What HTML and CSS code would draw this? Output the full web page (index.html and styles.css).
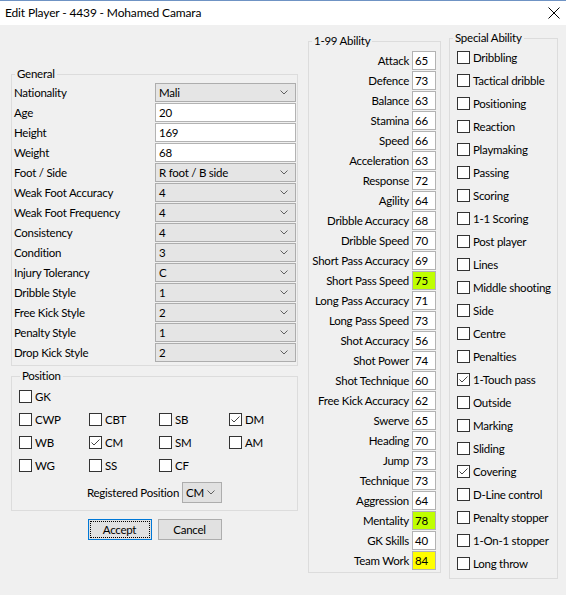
FILE: index.html
```html
<!DOCTYPE html>
<html>
<head>
<meta charset="utf-8">
<link rel="stylesheet" href="styles.css">
</head>
<body>
<div class="window">
  <div class="titlebar">
    <span class="title">Edit Player - 4439 - Mohamed Camara</span>
    <svg class="close" width="12" height="12" viewBox="0 0 12 12"><path d="M0.5 0.5 L11.5 11.5 M11.5 0.5 L0.5 11.5" stroke="#000" stroke-width="1" fill="none"/></svg>
  </div>
  <div class="content">
    <div class="left">
      <fieldset class="group general">
        <legend>General</legend>
        <div class="form-grid">
          <span class="lbl">Nationality</span><div class="combo"><span>Mali</span><svg class="chev" width="8" height="5" viewBox="0 0 8 5"><path d="M0.5 0.5 L4 4 L7.5 0.5" stroke="#606060" fill="none"/></svg></div>
          <span class="lbl">Age</span><div class="textbox">20</div>
          <span class="lbl">Height</span><div class="textbox">169</div>
          <span class="lbl">Weight</span><div class="textbox">68</div>
          <span class="lbl">Foot / Side</span><div class="combo"><span>R foot / B side</span><svg class="chev" width="8" height="5" viewBox="0 0 8 5"><path d="M0.5 0.5 L4 4 L7.5 0.5" stroke="#606060" fill="none"/></svg></div>
          <span class="lbl">Weak Foot Accuracy</span><div class="combo"><span>4</span><svg class="chev" width="8" height="5" viewBox="0 0 8 5"><path d="M0.5 0.5 L4 4 L7.5 0.5" stroke="#606060" fill="none"/></svg></div>
          <span class="lbl">Weak Foot Frequency</span><div class="combo"><span>4</span><svg class="chev" width="8" height="5" viewBox="0 0 8 5"><path d="M0.5 0.5 L4 4 L7.5 0.5" stroke="#606060" fill="none"/></svg></div>
          <span class="lbl">Consistency</span><div class="combo"><span>4</span><svg class="chev" width="8" height="5" viewBox="0 0 8 5"><path d="M0.5 0.5 L4 4 L7.5 0.5" stroke="#606060" fill="none"/></svg></div>
          <span class="lbl">Condition</span><div class="combo"><span>3</span><svg class="chev" width="8" height="5" viewBox="0 0 8 5"><path d="M0.5 0.5 L4 4 L7.5 0.5" stroke="#606060" fill="none"/></svg></div>
          <span class="lbl">Injury Tolerancy</span><div class="combo"><span>C</span><svg class="chev" width="8" height="5" viewBox="0 0 8 5"><path d="M0.5 0.5 L4 4 L7.5 0.5" stroke="#606060" fill="none"/></svg></div>
          <span class="lbl">Dribble Style</span><div class="combo"><span>1</span><svg class="chev" width="8" height="5" viewBox="0 0 8 5"><path d="M0.5 0.5 L4 4 L7.5 0.5" stroke="#606060" fill="none"/></svg></div>
          <span class="lbl">Free Kick Style</span><div class="combo"><span>2</span><svg class="chev" width="8" height="5" viewBox="0 0 8 5"><path d="M0.5 0.5 L4 4 L7.5 0.5" stroke="#606060" fill="none"/></svg></div>
          <span class="lbl">Penalty Style</span><div class="combo"><span>1</span><svg class="chev" width="8" height="5" viewBox="0 0 8 5"><path d="M0.5 0.5 L4 4 L7.5 0.5" stroke="#606060" fill="none"/></svg></div>
          <span class="lbl">Drop Kick Style</span><div class="combo"><span>2</span><svg class="chev" width="8" height="5" viewBox="0 0 8 5"><path d="M0.5 0.5 L4 4 L7.5 0.5" stroke="#606060" fill="none"/></svg></div>
        </div>
      </fieldset>

      <fieldset class="group position">
        <legend>Position</legend>
        <div class="pos-grid">
          <div class="check"><span class="box"></span>GK</div>
          <div></div><div></div><div></div>
          <div class="check"><span class="box"></span>CWP</div>
          <div class="check"><span class="box"></span>CBT</div>
          <div class="check"><span class="box"></span>SB</div>
          <div class="check"><span class="box on"><svg width="11" height="11" viewBox="0 0 11 11"><path d="M1.5 5.5 L4 8 L9.5 2.5" stroke="#444" fill="none"/></svg></span>DM</div>
          <div class="check"><span class="box"></span>WB</div>
          <div class="check"><span class="box on"><svg width="11" height="11" viewBox="0 0 11 11"><path d="M1.5 5.5 L4 8 L9.5 2.5" stroke="#444" fill="none"/></svg></span>CM</div>
          <div class="check"><span class="box"></span>SM</div>
          <div class="check"><span class="box"></span>AM</div>
          <div class="check"><span class="box"></span>WG</div>
          <div class="check"><span class="box"></span>SS</div>
          <div class="check"><span class="box"></span>CF</div>
          <div></div>
        </div>
        <div class="reg-row">
          <span>Registered Position</span>
          <div class="combo small"><span>CM</span><svg class="chev" width="8" height="5" viewBox="0 0 8 5"><path d="M0.5 0.5 L4 4 L7.5 0.5" stroke="#606060" fill="none"/></svg></div>
        </div>
      </fieldset>

      <div class="buttons">
        <div class="btn default"><span class="focus">Accept</span></div>
        <div class="btn">Cancel</div>
      </div>
    </div>

    <fieldset class="group ability">
      <legend>1-99 Ability</legend>
      <div class="arow"><span>Attack</span><div class="num">65</div></div>
      <div class="arow"><span>Defence</span><div class="num">73</div></div>
      <div class="arow"><span>Balance</span><div class="num">63</div></div>
      <div class="arow"><span>Stamina</span><div class="num">66</div></div>
      <div class="arow"><span>Speed</span><div class="num">66</div></div>
      <div class="arow"><span>Acceleration</span><div class="num">63</div></div>
      <div class="arow"><span>Response</span><div class="num">72</div></div>
      <div class="arow"><span>Agility</span><div class="num">64</div></div>
      <div class="arow"><span>Dribble Accuracy</span><div class="num">68</div></div>
      <div class="arow"><span>Dribble Speed</span><div class="num">70</div></div>
      <div class="arow"><span>Short Pass Accuracy</span><div class="num">69</div></div>
      <div class="arow"><span>Short Pass Speed</span><div class="num lime">75</div></div>
      <div class="arow"><span>Long Pass Accuracy</span><div class="num">71</div></div>
      <div class="arow"><span>Long Pass Speed</span><div class="num">73</div></div>
      <div class="arow"><span>Shot Accuracy</span><div class="num">56</div></div>
      <div class="arow"><span>Shot Power</span><div class="num">74</div></div>
      <div class="arow"><span>Shot Technique</span><div class="num">60</div></div>
      <div class="arow"><span>Free Kick Accuracy</span><div class="num">62</div></div>
      <div class="arow"><span>Swerve</span><div class="num">65</div></div>
      <div class="arow"><span>Heading</span><div class="num">70</div></div>
      <div class="arow"><span>Jump</span><div class="num">73</div></div>
      <div class="arow"><span>Technique</span><div class="num">73</div></div>
      <div class="arow"><span>Aggression</span><div class="num">64</div></div>
      <div class="arow"><span>Mentality</span><div class="num lime">78</div></div>
      <div class="arow"><span>GK Skills</span><div class="num">40</div></div>
      <div class="arow"><span>Team Work</span><div class="num yellow">84</div></div>
    </fieldset>

    <fieldset class="group special">
      <legend>Special Ability</legend>
      <div class="check srow"><span class="box"></span>Dribbling</div>
      <div class="check srow"><span class="box"></span>Tactical dribble</div>
      <div class="check srow"><span class="box"></span>Positioning</div>
      <div class="check srow"><span class="box"></span>Reaction</div>
      <div class="check srow"><span class="box"></span>Playmaking</div>
      <div class="check srow"><span class="box"></span>Passing</div>
      <div class="check srow"><span class="box"></span>Scoring</div>
      <div class="check srow"><span class="box"></span>1-1 Scoring</div>
      <div class="check srow"><span class="box"></span>Post player</div>
      <div class="check srow"><span class="box"></span>Lines</div>
      <div class="check srow"><span class="box"></span>Middle shooting</div>
      <div class="check srow"><span class="box"></span>Side</div>
      <div class="check srow"><span class="box"></span>Centre</div>
      <div class="check srow"><span class="box"></span>Penalties</div>
      <div class="check srow"><span class="box on"><svg width="11" height="11" viewBox="0 0 11 11"><path d="M1.5 5.5 L4 8 L9.5 2.5" stroke="#444" fill="none"/></svg></span>1-Touch pass</div>
      <div class="check srow"><span class="box"></span>Outside</div>
      <div class="check srow"><span class="box"></span>Marking</div>
      <div class="check srow"><span class="box"></span>Sliding</div>
      <div class="check srow"><span class="box on"><svg width="11" height="11" viewBox="0 0 11 11"><path d="M1.5 5.5 L4 8 L9.5 2.5" stroke="#444" fill="none"/></svg></span>Covering</div>
      <div class="check srow"><span class="box"></span>D-Line control</div>
      <div class="check srow"><span class="box"></span>Penalty stopper</div>
      <div class="check srow"><span class="box"></span>1-On-1 stopper</div>
      <div class="check srow"><span class="box"></span>Long throw</div>
    </fieldset>
  </div>
</div>
</body>
</html>
```

FILE: styles.css
```css
* { box-sizing: border-box; }
html, body { margin: 0; padding: 0; }
body {
  width: 566px;
  height: 595px;
  background: #f0f0f0;
  font-family: "Lato", "Liberation Sans", sans-serif;
  font-size: 11.5px;
  letter-spacing: -0.25px;
  color: #000;
  overflow: hidden;
}
.window { width: 566px; height: 595px; display: flex; flex-direction: column; }

.titlebar {
  height: 25px;
  background: #fff;
  border-top: 1px solid #6f93c4;
  display: flex;
  align-items: center;
  justify-content: space-between;
  padding: 0 5px 0 5px;
}
.title { font-size: 12px; letter-spacing: -0.15px; line-height: 16px; }
.close { margin-right: 1px; }

.content {
  display: flex;
  align-items: flex-start;
  padding: 6px 0 0 11px;
}

.group {
  margin: 0;
  border: 1px solid #dcdcdc;
  min-width: 0;
}
.group legend {
  padding: 0 2px;
  line-height: 14px;
  margin-left: 1px;
}

.left { width: 287px; margin-top: 36px; }
.general { padding: 2px 1px 2px 2px; }
.form-grid {
  display: grid;
  grid-template-columns: 141px 141px;
  grid-auto-rows: 20px;
}
.lbl { line-height: 20px; white-space: nowrap; }

.combo, .textbox {
  height: 19px;
  border: 1px solid #adadad;
  display: flex;
  align-items: center;
  padding-left: 3px;
  line-height: 17px;
}
.combo { background: #e5e5e5; justify-content: space-between; padding-right: 7px; }
.textbox { background: #fff; border-color: #b3b3b3; }
.chev { display: block; }

.position { margin-top: 3px; padding: 2px 1px 7px 7px; }
.pos-grid {
  display: grid;
  grid-template-columns: repeat(4, 70px);
  grid-auto-rows: 23px;
}
.check { display: flex; align-items: center; white-space: nowrap; }
.box {
  width: 13px;
  height: 13px;
  border: 1px solid #333;
  background: #fff;
  margin-right: 3px;
  display: flex;
  align-items: center;
  justify-content: center;
  flex: none;
}
.reg-row {
  display: flex;
  justify-content: center;
  align-items: center;
  gap: 3px;
  margin-top: 5px;
  margin-left: -6px;
}
.combo.small { width: 40px; height: 21px; padding-right: 6px; background: #e1e1e1; }

.buttons {
  display: flex;
  justify-content: center;
  gap: 6px;
  margin-top: 8px;
}
.btn {
  width: 64px;
  height: 21px;
  border: 1px solid #adadad;
  background: #e1e1e1;
  display: flex;
  align-items: center;
  justify-content: center;
}
.btn.default { border: 1px solid #0078d7; padding: 1px; }
.btn .focus {
  width: 100%;
  height: 100%;
  border: 1px dotted #000;
  display: flex;
  align-items: center;
  justify-content: center;
}

.ability {
  width: 133px;
  margin-left: 10px;
  margin-top: 3px;
  padding: 2px 4px 2px 2px;
}
.arow {
  display: flex;
  justify-content: flex-end;
  align-items: center;
  gap: 3px;
  height: 20px;
  white-space: nowrap;
}
.num {
  width: 24px;
  height: 19px;
  background: #fff;
  border: 1px solid #b3b3b3;
  padding-left: 2px;
  line-height: 17px;
}
.num.lime { background: #bfff00; }
.num.yellow { background: #ffff00; }

.special {
  width: 109px;
  margin-left: 8px;
  margin-top: 0;
  padding: 1px 1px 3px 7px;
}
.special legend { margin-left: -4px; }
.srow { height: 23px; }
```
